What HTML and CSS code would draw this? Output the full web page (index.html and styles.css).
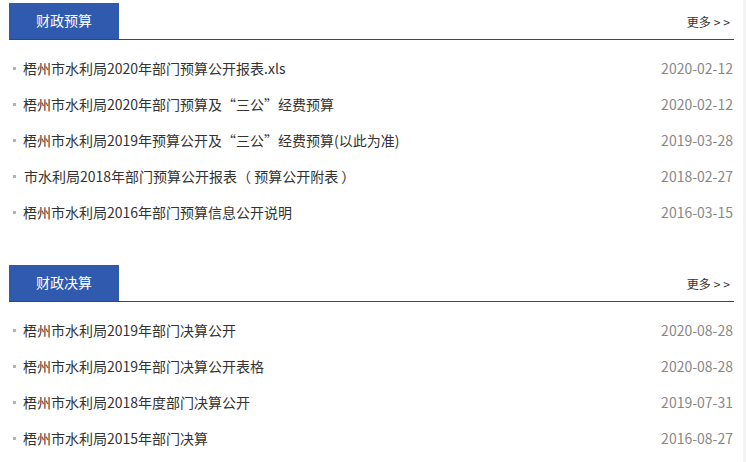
FILE: index.html
```html
<!DOCTYPE html>
<html lang="zh-CN">
<head>
  <meta charset="UTF-8" />
  <title>财政预算决算</title>
  <link rel="stylesheet" href="styles.css">
</head>
<body>
  <div class="page">
    <div class="section">
      <div class="section-head">
        <span class="section-title">财政预算</span>
        <a class="more" href="#">更多<span class="arrows">&gt;&gt;</span></a>
      </div>
      <ul class="news-list">
        <li><a href="#">梧州市水利局2020年部门预算公开报表.xls</a><span class="date">2020-02-12</span></li>
        <li><a href="#">梧州市水利局2020年部门预算及“三公”经费预算</a><span class="date">2020-02-12</span></li>
        <li><a href="#">梧州市水利局2019年预算公开及“三公”经费预算(以此为准)</a><span class="date">2019-03-28</span></li>
        <li><a href="#" class="indent">市水利局2018年部门预算公开报表（ 预算公开附表 ）</a><span class="date">2018-02-27</span></li>
        <li><a href="#">梧州市水利局2016年部门预算信息公开说明</a><span class="date">2016-03-15</span></li>
      </ul>
    </div>

    <div class="section">
      <div class="section-head">
        <span class="section-title">财政决算</span>
        <a class="more" href="#">更多<span class="arrows">&gt;&gt;</span></a>
      </div>
      <ul class="news-list">
        <li><a href="#">梧州市水利局2019年部门决算公开</a><span class="date">2020-08-28</span></li>
        <li><a href="#">梧州市水利局2019年部门决算公开表格</a><span class="date">2020-08-28</span></li>
        <li><a href="#">梧州市水利局2018年度部门决算公开</a><span class="date">2019-07-31</span></li>
        <li><a href="#">梧州市水利局2015年部门决算</a><span class="date">2016-08-27</span></li>
      </ul>
    </div>
  </div>
</body>
</html>
```

FILE: styles.css
```css
* {
  margin: 0;
  padding: 0;
  box-sizing: border-box;
}

body {
  background: #f3f3f3;
  font-family: "Noto Sans CJK SC", "Liberation Sans", sans-serif;
  color: #333;
}

a {
  color: inherit;
  text-decoration: none;
}

.page {
  width: 743px;
  min-height: 462px;
  background: #fff;
  padding: 3px 9px 0;
}

.section {
  margin-bottom: 35px;
}

.section-head {
  display: flex;
  justify-content: space-between;
  align-items: flex-end;
  height: 37px;
  border-bottom: 1px solid #1c4f88;
}

.section-title {
  width: 110px;
  height: 36px;
  line-height: 35px;
  background: #2f5aae;
  color: #fff;
  font-size: 14px;
  text-align: center;
}

.more {
  font-size: 12px;
  line-height: 12px;
  color: #333;
  padding: 0 1px 11px 0;
}

.arrows {
  margin-left: 3px;
  letter-spacing: 3px;
}

.news-list {
  list-style: none;
  padding-top: 10px;
}

.news-list li {
  display: flex;
  justify-content: space-between;
  align-items: center;
  height: 36px;
  line-height: 20px;
  font-size: 14px;
  padding: 0 0 1px 14px;
  position: relative;
}

.news-list li::before {
  content: '';
  position: absolute;
  left: 4px;
  top: 17px;
  width: 3px;
  height: 3px;
  background: #b4b4b4;
}

.news-list .indent {
  padding-left: 1px;
}

.date {
  color: #888;
  padding-right: 1px;
}
```
